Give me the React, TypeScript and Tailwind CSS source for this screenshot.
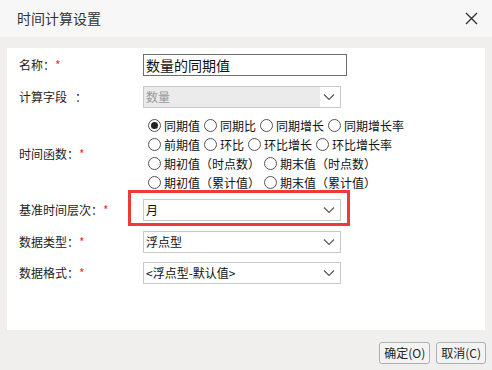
import React from "react";

const F = { fontFamily: '"Noto Sans CJK SC", "Noto Sans", sans-serif' };

function Chevron() {
  return (
    <svg width="12" height="8" viewBox="0 0 12 8" className="shrink-0">
      <path d="M1 1.5 L6 6.5 L11 1.5" fill="none" stroke="#555" strokeWidth="1.1" />
    </svg>
  );
}

function Radio({ checked, label }: { checked?: boolean; label: string }) {
  return (
    <span className="inline-flex items-center mr-[4px]">
      <span className="w-[13px] h-[13px] rounded-full border border-[#555] bg-white flex items-center justify-center mr-[3px]">
        {checked && <span className="w-[7px] h-[7px] rounded-full bg-[#222]" />}
      </span>
      <span>{label}</span>
    </span>
  );
}

function Label({ text, req }: { text: string; req?: boolean }) {
  return (
    <div className="w-[136px] pl-[12px] shrink-0 text-[12px] text-[#222] whitespace-pre">
      {text}
      {req && <span className="text-[#e4393c]">*</span>}
    </div>
  );
}

function Select({ value, disabled }: { value: string; disabled?: boolean }) {
  return (
    <div
      className={`w-[198px] h-[22px] border border-[#c8c8c8] flex items-center text-[12px] ${
        disabled ? "text-[#999]" : "text-[#111] bg-white"
      }`}
    >
      <div className={`flex-1 h-full flex items-center pl-[2px] ${disabled ? "bg-[#ebebeb]" : ""}`}>{value}</div>
      <div className="w-[17px] h-full flex items-center justify-center bg-white mr-[3px]">
        <Chevron />
      </div>
    </div>
  );
}

export default function App() {
  return (
    <div style={F} className="w-[492px] h-[370px] bg-[#f0efee] flex flex-col">
      <div className="h-[37px] bg-[#f7f7f7] flex items-center justify-between pl-[17px] pr-[14px]">
        <span className="text-[14px] text-[#333]">时间计算设置</span>
        <svg width="13" height="13" viewBox="0 0 13 13">
          <path d="M1 1 L12 12 M12 1 L1 12" stroke="#333" strokeWidth="1.4" />
        </svg>
      </div>
      <div className="mt-[11px] mx-[7px] h-[282px] bg-white flex flex-col pt-[6px]">
        <div className="flex items-center h-[22px]">
          <Label text="名称：" req />
          <div className="w-[204px] h-[22px] border border-[#6e6e6e] text-[14px] text-[#111] flex items-center pl-[2px]">
            数量的同期值
          </div>
        </div>
        <div className="flex items-center h-[22px] mt-[10px]">
          <Label text={"计算字段   ："} />
          <Select value="数量" disabled />
        </div>
        <div className="flex items-center mt-[8px]">
          <Label text="时间函数：" req />
          <div className="flex flex-col text-[12px] text-[#111] pl-[5px] leading-[19px]">
            <div className="flex">
              <Radio checked label="同期值" />
              <Radio label="同期比" />
              <Radio label="同期增长" />
              <Radio label="同期增长率" />
            </div>
            <div className="flex">
              <Radio label="前期值" />
              <Radio label="环比" />
              <Radio label="环比增长" />
              <Radio label="环比增长率" />
            </div>
            <div className="flex">
              <Radio label="期初值（时点数）" />
              <Radio label="期末值（时点数）" />
            </div>
            <div className="flex">
              <Radio label="期初值（累计值）" />
              <Radio label="期末值（累计值）" />
            </div>
          </div>
        </div>
        <div className="relative flex items-center h-[22px] mt-[7px]">
          <Label text="基准时间层次：" req />
          <Select value="月" />
          <div className="absolute left-[121px] top-[-9px] w-[222px] h-[36px] border-[3px] border-[#f03a3a]" />
        </div>
        <div className="flex items-center h-[22px] mt-[10px]">
          <Label text="数据类型：" req />
          <Select value="浮点型" />
        </div>
        <div className="flex items-center h-[22px] mt-[9px]">
          <Label text="数据格式：" req />
          <Select value="<浮点型-默认值>" />
        </div>
      </div>
      <div className="flex justify-end gap-[6px] pr-[6px] mt-[12px]">
        <button className="h-[22px] px-[4px] border border-[#a9b0b8] rounded-[3px] bg-[#f3f3f3] text-[12px] text-[#222]">
          确定(O)
        </button>
        <button className="h-[22px] px-[4px] border border-[#a9b0b8] rounded-[3px] bg-[#f3f3f3] text-[12px] text-[#222]">
          取消(C)
        </button>
      </div>
    </div>
  );
}
